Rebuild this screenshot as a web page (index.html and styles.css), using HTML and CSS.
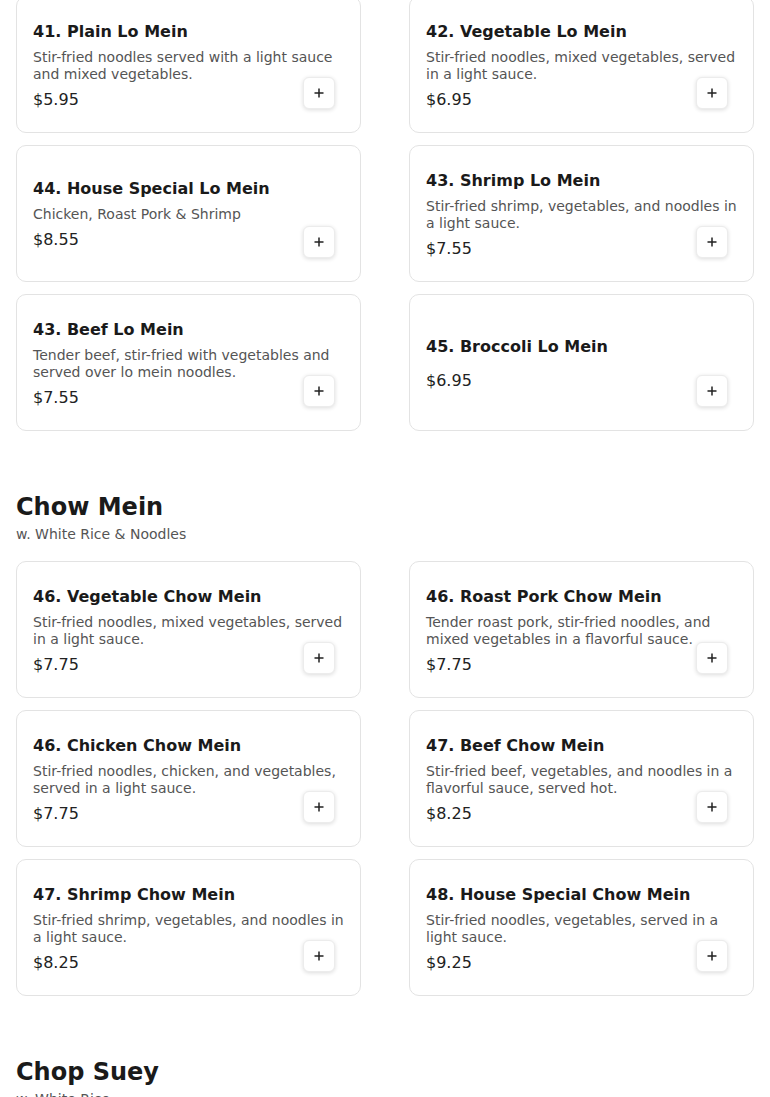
FILE: index.html
```html
<!DOCTYPE html>
<html lang="en">
<head>
<meta charset="utf-8">
<title>Menu</title>
<link rel="stylesheet" href="styles.css">
</head>
<body>
<main class="menu">
  <section class="section section-first">
    <div class="grid">
      <article class="card">
        <div class="info">
          <h3 class="name">41. Plain Lo Mein</h3>
          <p class="desc">Stir-fried noodles served with a light sauce and mixed vegetables.</p>
          <p class="price">$5.95</p>
        </div>
        <button class="add" aria-label="Add"><svg viewBox="0 0 12 12" width="12" height="12"><path d="M6 1.5v9M1.5 6h9"/></svg></button>
      </article>
      <article class="card">
        <div class="info">
          <h3 class="name">42. Vegetable Lo Mein</h3>
          <p class="desc">Stir-fried noodles, mixed vegetables, served in a light sauce.</p>
          <p class="price">$6.95</p>
        </div>
        <button class="add" aria-label="Add"><svg viewBox="0 0 12 12" width="12" height="12"><path d="M6 1.5v9M1.5 6h9"/></svg></button>
      </article>
      <article class="card">
        <div class="info">
          <h3 class="name">44. House Special Lo Mein</h3>
          <p class="desc">Chicken, Roast Pork &amp; Shrimp</p>
          <p class="price">$8.55</p>
        </div>
        <button class="add" aria-label="Add"><svg viewBox="0 0 12 12" width="12" height="12"><path d="M6 1.5v9M1.5 6h9"/></svg></button>
      </article>
      <article class="card">
        <div class="info">
          <h3 class="name">43. Shrimp Lo Mein</h3>
          <p class="desc">Stir-fried shrimp, vegetables, and noodles in a light sauce.</p>
          <p class="price">$7.55</p>
        </div>
        <button class="add" aria-label="Add"><svg viewBox="0 0 12 12" width="12" height="12"><path d="M6 1.5v9M1.5 6h9"/></svg></button>
      </article>
      <article class="card">
        <div class="info">
          <h3 class="name">43. Beef Lo Mein</h3>
          <p class="desc">Tender beef, stir-fried with vegetables and served over lo mein noodles.</p>
          <p class="price">$7.55</p>
        </div>
        <button class="add" aria-label="Add"><svg viewBox="0 0 12 12" width="12" height="12"><path d="M6 1.5v9M1.5 6h9"/></svg></button>
      </article>
      <article class="card">
        <div class="info">
          <h3 class="name">45. Broccoli Lo Mein</h3>
          <p class="price">$6.95</p>
        </div>
        <button class="add" aria-label="Add"><svg viewBox="0 0 12 12" width="12" height="12"><path d="M6 1.5v9M1.5 6h9"/></svg></button>
      </article>
    </div>
  </section>

  <section class="section">
    <h2 class="section-title">Chow Mein</h2>
    <p class="section-sub">w. White Rice &amp; Noodles</p>
    <div class="grid">
      <article class="card">
        <div class="info">
          <h3 class="name">46. Vegetable Chow Mein</h3>
          <p class="desc">Stir-fried noodles, mixed vegetables, served in a light sauce.</p>
          <p class="price">$7.75</p>
        </div>
        <button class="add" aria-label="Add"><svg viewBox="0 0 12 12" width="12" height="12"><path d="M6 1.5v9M1.5 6h9"/></svg></button>
      </article>
      <article class="card">
        <div class="info">
          <h3 class="name">46. Roast Pork Chow Mein</h3>
          <p class="desc">Tender roast pork, stir-fried noodles, and mixed vegetables in a flavorful sauce.</p>
          <p class="price">$7.75</p>
        </div>
        <button class="add" aria-label="Add"><svg viewBox="0 0 12 12" width="12" height="12"><path d="M6 1.5v9M1.5 6h9"/></svg></button>
      </article>
      <article class="card">
        <div class="info">
          <h3 class="name">46. Chicken Chow Mein</h3>
          <p class="desc">Stir-fried noodles, chicken, and vegetables, served in a light sauce.</p>
          <p class="price">$7.75</p>
        </div>
        <button class="add" aria-label="Add"><svg viewBox="0 0 12 12" width="12" height="12"><path d="M6 1.5v9M1.5 6h9"/></svg></button>
      </article>
      <article class="card">
        <div class="info">
          <h3 class="name">47. Beef Chow Mein</h3>
          <p class="desc">Stir-fried beef, vegetables, and noodles in a flavorful sauce, served hot.</p>
          <p class="price">$8.25</p>
        </div>
        <button class="add" aria-label="Add"><svg viewBox="0 0 12 12" width="12" height="12"><path d="M6 1.5v9M1.5 6h9"/></svg></button>
      </article>
      <article class="card">
        <div class="info">
          <h3 class="name">47. Shrimp Chow Mein</h3>
          <p class="desc">Stir-fried shrimp, vegetables, and noodles in a light sauce.</p>
          <p class="price">$8.25</p>
        </div>
        <button class="add" aria-label="Add"><svg viewBox="0 0 12 12" width="12" height="12"><path d="M6 1.5v9M1.5 6h9"/></svg></button>
      </article>
      <article class="card">
        <div class="info">
          <h3 class="name">48. House Special Chow Mein</h3>
          <p class="desc">Stir-fried noodles, vegetables, served in a light sauce.</p>
          <p class="price">$9.25</p>
        </div>
        <button class="add" aria-label="Add"><svg viewBox="0 0 12 12" width="12" height="12"><path d="M6 1.5v9M1.5 6h9"/></svg></button>
      </article>
    </div>
  </section>

  <section class="section">
    <h2 class="section-title">Chop Suey</h2>
    <p class="section-sub">w. White Rice</p>
    <div class="grid">
      <article class="card">
        <div class="info">
          <h3 class="name">49. Vegetable Chop Suey</h3>
          <p class="desc">Mixed vegetables in a light brown sauce.</p>
          <p class="price">$7.75</p>
        </div>
        <button class="add" aria-label="Add"><svg viewBox="0 0 12 12" width="12" height="12"><path d="M6 1.5v9M1.5 6h9"/></svg></button>
      </article>
      <article class="card">
        <div class="info">
          <h3 class="name">50. Chicken Chop Suey</h3>
          <p class="desc">Chicken and mixed vegetables in a light brown sauce.</p>
          <p class="price">$8.25</p>
        </div>
        <button class="add" aria-label="Add"><svg viewBox="0 0 12 12" width="12" height="12"><path d="M6 1.5v9M1.5 6h9"/></svg></button>
      </article>
    </div>
  </section>
</main>
</body>
</html>
```

FILE: styles.css
```css
* {
  box-sizing: border-box;
}

html, body {
  margin: 0;
  padding: 0;
  background: #ffffff;
}

body {
  font-family: "DejaVu Sans", "Noto Sans", sans-serif;
  color: #1a1a1a;
}

.menu {
  padding: 0 16px 40px;
}

.section-first {
  margin-top: -4px;
}

.section + .section {
  margin-top: 62px;
}

.section-title {
  margin: 0 0 5px;
  font-size: 24px;
  line-height: 28px;
  font-weight: 700;
  color: #1a1a1a;
}

.section-sub {
  margin: 0 0 18px;
  font-size: 14px;
  line-height: 17px;
  color: #555555;
}

.grid {
  display: grid;
  grid-template-columns: 1fr 1fr;
  gap: 12px 48px;
}

.card {
  position: relative;
  display: flex;
  align-items: center;
  min-height: 137px;
  padding: 17px 16px 15px;
  border: 1px solid #e3e3e3;
  border-radius: 10px;
  background: #ffffff;
}

.info {
  flex: 1;
  min-width: 0;
  display: flex;
  flex-direction: column;
}

.name {
  margin: 0 0 7px;
  font-size: 16px;
  line-height: 20px;
  font-weight: 700;
  color: #1a1a1a;
}

.desc {
  margin: 0;
  font-size: 14px;
  line-height: 17px;
  color: #555555;
}

.price {
  margin: 7px 0 0;
  font-size: 16px;
  line-height: 20px;
  color: #222222;
}

.add {
  position: absolute;
  right: 25px;
  bottom: 23px;
  display: flex;
  align-items: center;
  justify-content: center;
  width: 32px;
  height: 32px;
  padding: 0;
  border: 1px solid #ececec;
  border-radius: 6px;
  background: #ffffff;
  box-shadow: 0 1px 4px rgba(0, 0, 0, 0.14);
  cursor: pointer;
}

.add svg path {
  fill: none;
  stroke: #222222;
  stroke-width: 1.5;
}
```
